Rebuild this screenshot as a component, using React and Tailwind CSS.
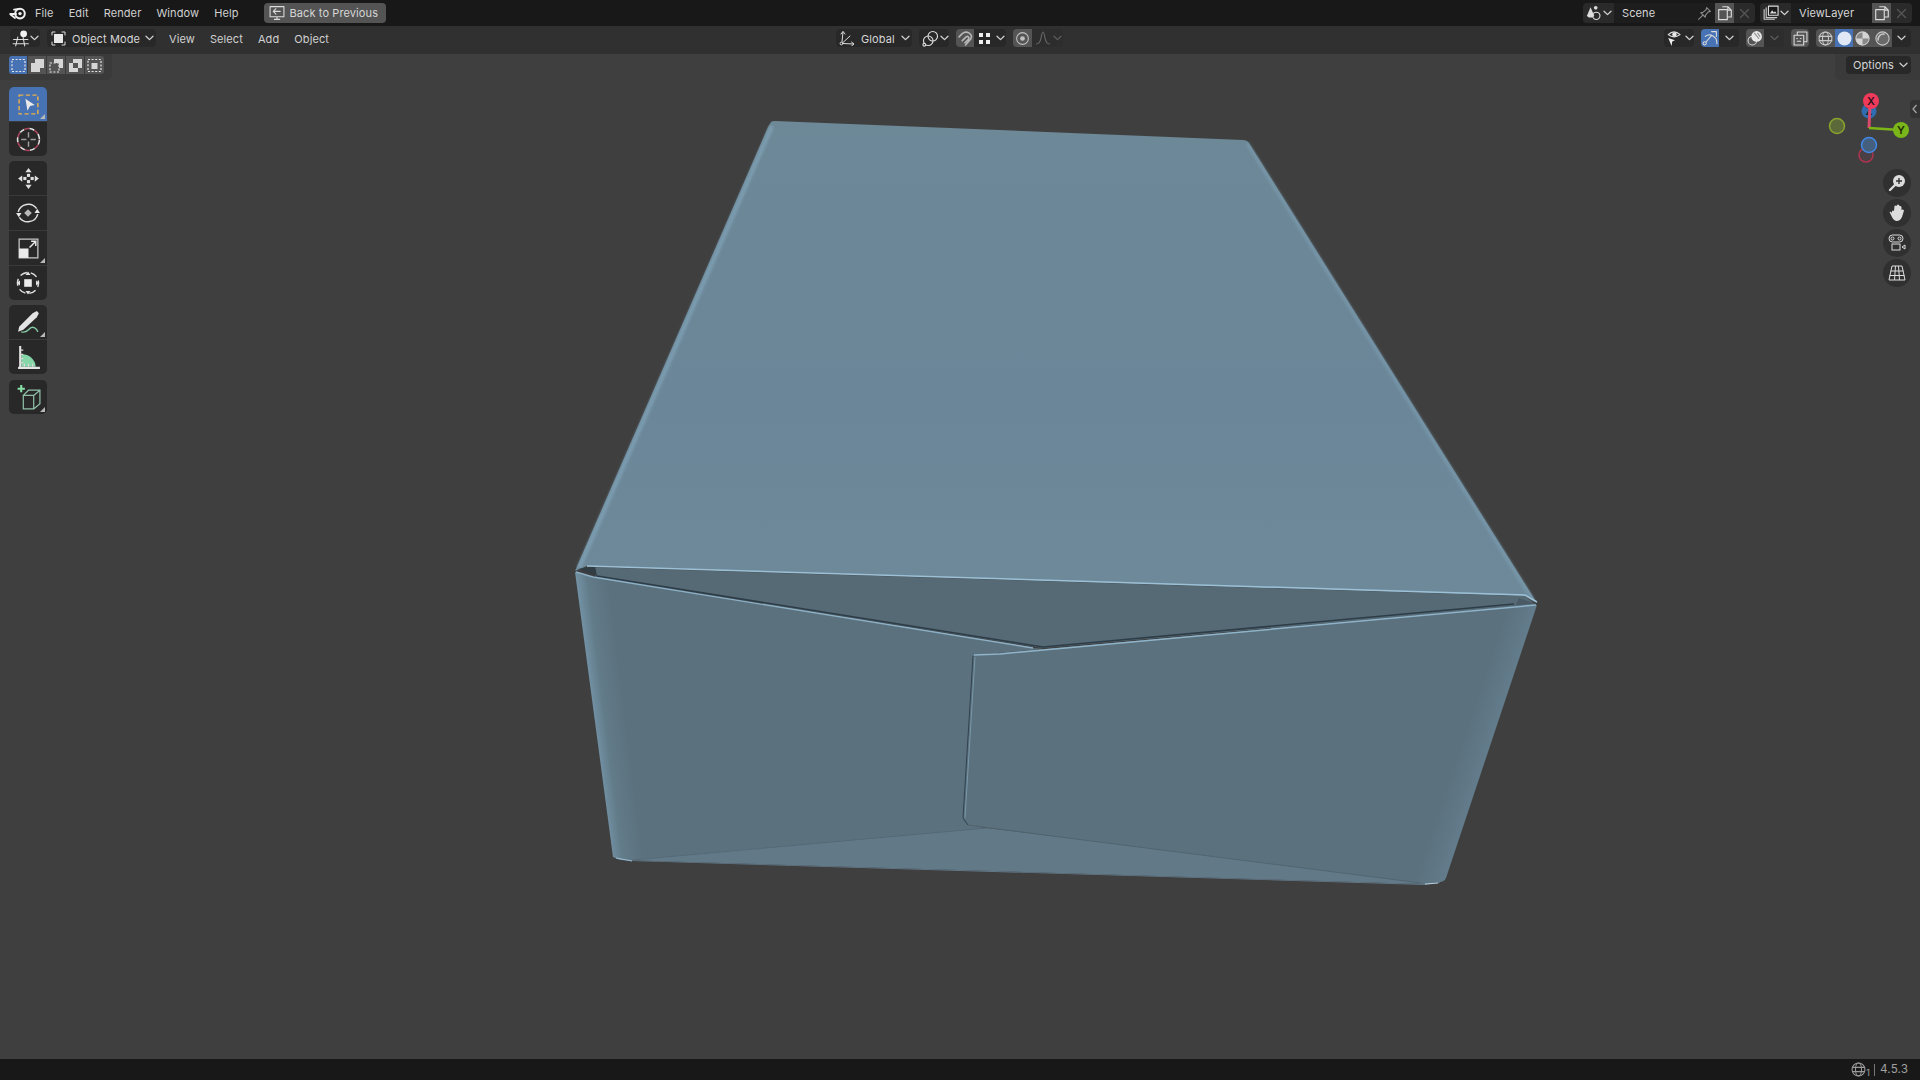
import React from "react";

const Chev = ({ dim }) => (
  <svg width="9" height="6" viewBox="0 0 9 6" className="shrink-0" fill="none" stroke={dim ? "#5c5c5c" : "#d0d0d0"} strokeWidth="1.3" strokeLinecap="round" strokeLinejoin="round">
    <path d="M1 1.2 L4.5 4.6 L8 1.2" />
  </svg>
);

const Ico = ({ s = 16, vb = 16, children, className = "" }) => (
  <svg width={s} height={s} viewBox={`0 0 ${vb} ${vb}`} fill="none" stroke="#dcdcdc" strokeWidth="1" strokeLinecap="round" strokeLinejoin="round" className={`shrink-0 ${className}`}>
    {children}
  </svg>
);

const BlenderLogo = () => (
  <svg width="18" height="14" viewBox="0 0 18 14" fill="none" stroke="#f0f0f0" strokeLinecap="round">
    <circle cx="11" cy="7.6" r="4.8" strokeWidth="2" />
    <circle cx="11" cy="7.6" r="1.7" fill="#f0f0f0" stroke="none" />
    <path d="M1.2 8 H7 M5 3.6 L10 3 M1.5 8.5 L6 12" strokeWidth="1.8" />
  </svg>
);

const ViewportIcon = () => (
  <Ico s={18} vb={17}>
    <circle cx="11" cy="4.5" r="3.2" fill="#f2f2f2" stroke="none" />
    <path d="M1.5 10 H15 M1 14 H15.5 M5.5 7.5 L3.5 16 M10.5 8 L12 16" />
  </Ico>
);

const BtnText = ({ children, className = "" }) => (
  <span className={`text-[#d6d6d6] whitespace-nowrap ${className}`}>{children}</span>
);

const CopyIcon = () => (
  <Ico s={16} vb={14}>
    <path d="M5 1.5 H9.5 L12.5 4.5 V10.5 H9.5 M9.5 1.5 V4.5 H12.5" />
    <path d="M1.5 4 H9 V12.8 H1.5 Z" fill="#545454" />
  </Ico>
);

const XIcon = () => (
  <svg width="11" height="11" viewBox="0 0 11 11" stroke="#555" strokeWidth="1.4" strokeLinecap="round"><path d="M1.5 1.5 L9.5 9.5 M9.5 1.5 L1.5 9.5" /></svg>
);

const DataField = ({ icon, label, width, pin, className = "" }) => (
  <div className={`flex h-5 rounded-[4px] overflow-hidden ${className}`}>
    <div className="w-[31px] bg-[#2a2a2a] flex items-center pl-[3px] gap-[1px]">
      {icon}
      <Chev />
    </div>
    <div className={`${width} bg-[#1d1d1d] flex items-center pl-2 pr-[3px] justify-between`}>
      <BtnText>{label}</BtnText>
      {pin && (
        <Ico s={15} vb={14}>
          <path d="M9 1.5 L12.5 5 L10.5 5.5 L8 8.5 L7.8 10.5 L3.5 6.2 L5.5 6 L8.5 3.5 Z M5.5 8.5 L1.5 12.5" stroke="#8a8a8a" />
        </Ico>
      )}
    </div>
    <div className="w-[19px] bg-[#545454] flex items-center justify-center"><CopyIcon /></div>
    <div className="w-[21px] bg-[#2a2a2a] flex items-center justify-center"><XIcon /></div>
  </div>
);

const SelMode = ({ kind, active }) => (
  <div className={`w-[19px] h-[18px] flex items-center justify-center ${active ? "bg-[#4772b3]" : "bg-[#545454]"} border-r border-[#3a3a3a] last:border-r-0`}>
    <svg width="15" height="15" viewBox="0 0 15 15" fill="none" stroke="#e6e6e6" strokeWidth="1.2" strokeDasharray="2 1.6">
      {kind === 0 && <rect x="1" y="1.5" width="13" height="12" />}
      {kind === 1 && <path d="M1 5 H5 V1 H14 V10 H10 V14 H1 Z" fill="#d6d6d6" stroke="none" />}
      {kind === 2 && (
        <>
          <rect x="1" y="5" width="9" height="9" />
          <path d="M5 1 H14 V10 H10 V5 H5 Z" fill="#d6d6d6" stroke="none" />
        </>
      )}
      {kind === 3 && <path fillRule="evenodd" d="M1 5 H5 V1 H14 V10 H10 V14 H1 Z M5 5 V10 H10 V5 Z" fill="#d6d6d6" stroke="none" />}
      {kind === 4 && (
        <>
          <rect x="1" y="1.5" width="13" height="12" />
          <rect x="4.5" y="5" width="6" height="6" fill="#d6d6d6" stroke="none" />
        </>
      )}
    </svg>
  </div>
);

const Corner = () => (
  <svg width="5" height="5" viewBox="0 0 5 5" className="absolute right-[2px] bottom-[2px]"><path d="M5 0 V5 H0 Z" fill="#b8b8b8" /></svg>
);

const ToolBtn = ({ active, corner, children, className = "" }) => (
  <div className={`relative h-[34px] flex items-center justify-center ${active ? "bg-[#4772b3]" : "bg-[#282828]"} ${className}`}>
    {children}
    {corner && <Corner />}
  </div>
);

const ToolGroup = ({ children, className = "" }) => (
  <div className={`w-[38px] rounded-[5px] overflow-hidden flex flex-col gap-px bg-[#3a3a3a] ${className}`}>{children}</div>
);

const NavBtn = ({ children }) => (
  <div className="w-7 h-7 rounded-full bg-[#303030] flex items-center justify-center">{children}</div>
);

const Model = () => (
  <svg viewBox="0 54 1920 1005" className="absolute inset-0 w-full h-full">
    <defs>
      <linearGradient id="topFace" x1="0" y1="0" x2="0" y2="1">
        <stop offset="0" stopColor="#6d8897" />
        <stop offset="0.6" stopColor="#6b8698" />
        <stop offset="1" stopColor="#6e8a9a" />
      </linearGradient>
      <linearGradient id="flapL" gradientUnits="userSpaceOnUse" x1="575" y1="572" x2="607" y2="568">
        <stop offset="0" stopColor="#7292a5" />
        <stop offset="0.35" stopColor="#637c8a" />
        <stop offset="1" stopColor="#5b717e" />
      </linearGradient>
      <linearGradient id="flapR" gradientUnits="userSpaceOnUse" x1="1537" y1="605" x2="1510" y2="596">
        <stop offset="0" stopColor="#637c8b" />
        <stop offset="1" stopColor="#5b717e" />
      </linearGradient>
      <filter id="soft"><feGaussianBlur stdDeviation="1.5" /></filter>
    </defs>

    {/* top face */}
    <path d="M771 122 Q772 121 775 121 L1243 140 Q1247 140 1249 143 L1537 603 L1525 596 L587 566 L575 571 L768 127 Z" fill="url(#topFace)" />
    <path d="M772 126 L579 568" stroke="#84a8bd" strokeWidth="4" fill="none" filter="url(#soft)" opacity="0.7" />
    <path d="M1247 143 L1533 600" stroke="#7ea0b4" strokeWidth="3" fill="none" filter="url(#soft)" opacity="0.7" />

    {/* inner recess */}
    <path d="M587 567 L1525 596 L1536 605 L1043 648 L597 577 Z" fill="#566a76" />

    {/* left flap */}
    <path d="M575 572 L593 577 L1033 648 L1044 649 L973 655 L963 820 L968 825 L987 828 L633 860 L620 860 L613 857 Z" fill="url(#flapL)" />
    {/* right flap */}
    <path d="M973 655 L1044 649 L1537 605 L1446 878 Q1444 882 1440 882 L1425 884 L1060 837 L968 825 L963 820 Z" fill="url(#flapR)" />
    {/* bottom strip */}
    <path d="M620 860 L632 860 L987 828 L1060 837 L1421 883 L1425 884 Z" fill="#627988" />
    <path d="M613 857 L620 860 L632 861 L1425 885 L1440 883 L1440 882 L1425 884 L620 860 Z" fill="#627988" />

    {/* corner holes */}
    <path d="M578 569 L595 566 L597 576 Z" fill="#323c43" />
    <path d="M1516 605 L1519 598 L1536 604 Z" fill="#4a5a64" />

    {/* seams */}
    <path d="M597 576 L1043 647 L1514 604" stroke="#2d3d48" strokeWidth="1.6" fill="none" />
    <path d="M587 566 L1525 595 L1537 602" stroke="#9cc0d6" strokeWidth="1.5" fill="none" />
    <path d="M576 572 L593 577 L1033 648" stroke="#8cb0c6" strokeWidth="1.4" fill="none" />
    <path d="M974 655 L1000 654 L1536 605" stroke="#8fb3c9" strokeWidth="1.5" fill="none" />
    <path d="M973 656 L963 818 L968 825" stroke="#2f414d" strokeWidth="0.9" fill="none" />
    <path d="M975 657 L965 818" stroke="#86a6b9" strokeWidth="0.7" fill="none" />
    <path d="M968 825 L1060 837 L1421 883" stroke="#50656f" strokeWidth="0.9" fill="none" />
    <path d="M633 860 L987 828" stroke="#556b79" strokeWidth="0.8" fill="none" />
    <path d="M616 858 L632 861" stroke="#9cc0d6" strokeWidth="1" fill="none" />
    <path d="M1425 884 L1438 883" stroke="#b8d0dc" strokeWidth="1" fill="none" />
  </svg>
);

const Gizmo = () => (
  <svg width="90" height="90" viewBox="1825 90 90 80" className="absolute top-[36px] right-[5px] w-[90px] h-[80px]">
    <circle cx="1866" cy="155" r="7" fill="#4a3f44" stroke="#b03450" strokeWidth="1.5" />
    <circle cx="1869" cy="111" r="7.5" fill="#2f6cb0" />
    <text x="1869" y="115" fontSize="10" fontWeight="700" textAnchor="middle" fill="#123" fontFamily="Inter, sans-serif">Z</text>
    <circle cx="1837" cy="126" r="7.5" fill="#5c6a3a" stroke="#8aa32e" strokeWidth="1.5" />
    <path d="M1869 128 L1870 104" stroke="#d84a6c" strokeWidth="3" />
    <path d="M1869 128 L1900 130" stroke="#7cb518" strokeWidth="2.5" />
    <circle cx="1869" cy="145" r="7.5" fill="#44607e" stroke="#4189ea" strokeWidth="1.5" />
    <circle cx="1871" cy="101" r="8" fill="#f03a5c" />
    <text x="1871" y="105" fontSize="11" fontWeight="600" textAnchor="middle" fill="#30111a" fontFamily="Inter, sans-serif">X</text>
    <circle cx="1901" cy="130" r="8" fill="#7ab51a" />
    <text x="1901" y="134" fontSize="11" fontWeight="600" textAnchor="middle" fill="#1d2c05" fontFamily="Inter, sans-serif">Y</text>
  </svg>
);

export default function App() {
  return (
    <div className="w-screen h-screen overflow-hidden flex flex-col bg-[#3f3f3f] font-['Inter',sans-serif] text-[11px] tracking-[0.1px]">
      {/* top bar */}
      <header className="h-[26px] shrink-0 bg-[#181818] flex items-center">
        <div className="w-[35px] pl-[9px] flex"><BlenderLogo /></div>
        <nav className="flex gap-[15px] text-[#d0d0d0]">
          <span>File</span>
          <span>Edit</span>
          <span>Render</span>
          <span>Window</span>
          <span>Help</span>
        </nav>
        <div className="ml-[25px] w-[122px] h-5 rounded-[4px] bg-[#545454] flex items-center pl-[5px] gap-[5px]">
          <Ico s={16} vb={15}>
            <path d="M1 1.5 H14 V11 H1 Z M5 13.5 H10 M7.5 11 V13.5" />
            <path d="M10.5 6 H4 M6.5 3.5 L4 6 L6.5 8.5" />
          </Ico>
          <BtnText>Back to Previous</BtnText>
        </div>
        <div className="ml-auto pr-2 flex gap-[5px]">
          <DataField
            width="w-[101px]"
            label="Scene"
            pin
            icon={
              <Ico s={16} vb={14}>
                <path d="M4 2 L1 9 Q1 11 4 11 Q7 11 7 9 Z" fill="#dcdcdc" stroke="none" />
                <circle cx="8.5" cy="2.5" r="1.6" fill="#dcdcdc" stroke="none" />
                <circle cx="9" cy="9.5" r="3.2" />
              </Ico>
            }
          />
          <DataField
            width="w-[81px]"
            label="ViewLayer"
            icon={
              <Ico s={16} vb={14}>
                <path d="M1 4 V12.5 H10 M2.8 2.5 V11 H12" stroke="#c8c8c8" />
                <rect x="4.8" y="1" width="8.4" height="8" fill="#181818" />
                <path d="M6 7.5 L8 4.5 L9.5 6.5 L10.5 5.5 L12 7.5 Z" fill="#dcdcdc" stroke="none" />
              </Ico>
            }
          />
        </div>
      </header>

      {/* 3D viewport header */}
      <div className="h-[28px] shrink-0 bg-[#303030] grid grid-cols-[836px_828px_1fr] items-start pt-[3px]">
        <div className="flex items-center pl-[10px]">
          <div className="w-[30px] h-[18px] rounded-[4px] bg-[#282828] flex items-center pl-[2px]">
            <ViewportIcon />
            <Chev />
          </div>
          <div className="ml-[7px] w-[109px] h-[18px] rounded-[4px] bg-[#282828] flex items-center pl-[4px]">
            <Ico s={15} vb={15}>
              <path d="M1 4 V1 H4 M11 1 H14 V4 M14 11 V14 H11 M4 14 H1 V11" />
              <rect x="3" y="3" width="9" height="9" fill="#e8e8e8" stroke="none" />
            </Ico>
            <BtnText className="ml-[6px] translate-y-px">Object Mode</BtnText>
            <span className="ml-auto mr-[2px]"><Chev /></span>
          </div>
          <nav className="ml-[13px] flex gap-[15px] text-[#d0d0d0] translate-y-px">
            <span>View</span>
            <span>Select</span>
            <span>Add</span>
            <span>Object</span>
          </nav>
        </div>

        <div className="flex items-center gap-[7px]">
          <div className="w-[76px] h-[18px] rounded-[4px] bg-[#282828] flex items-center pl-[3px]">
            <Ico s={16} vb={16}>
              <circle cx="2.5" cy="13.5" r="1.4" />
              <path d="M3 12 L4 2 M2 4 L4 1.5 L6 4 M4 13.5 L14.5 14 M12.5 12 L15 14 L12.5 16 M4 12.5 L11 6" />
            </Ico>
            <BtnText className="ml-[6px] translate-y-px">Global</BtnText>
            <span className="ml-auto mr-[2px]"><Chev /></span>
          </div>
          <div className="w-[30px] h-[18px] rounded-[4px] bg-[#282828] flex items-center pl-[3px] gap-[1px]">
            <Ico s={17} vb={15}>
              <circle cx="9.5" cy="5.5" r="4.2" />
              <circle cx="5.5" cy="9.5" r="4.2" />
              <circle cx="2" cy="13" r="1.2" fill="#1d1d1d" />
            </Ico>
            <Chev />
          </div>
          <div className="flex h-[18px] rounded-[4px] overflow-hidden">
            <div className="w-[18px] bg-[#545454] flex items-center justify-center">
              <svg width="15" height="15" viewBox="0 0 14 14" fill="none" stroke="#b8b8b8" strokeWidth="1.5" strokeLinecap="round">
                <path d="M7 13 L11.5 8 Q14 4.5 10.5 2 Q7 0 4 2.5 L1 5.5 M4 9 L7.5 5.5 Q9 4.5 10 6 Q10.5 7 9.5 8 L6.5 11" />
              </svg>
            </div>
            <div className="w-[32px] bg-[#282828] flex items-center pl-[4px] gap-[5px]">
              <svg width="13" height="13" viewBox="0 0 13 13" fill="#f0f0f0">
                <rect x="1" y="1" width="4" height="4" />
                <rect x="8" y="1" width="4" height="4" />
                <rect x="1" y="8" width="4" height="4" />
                <rect x="8" y="8" width="4" height="4" />
              </svg>
              <Chev />
            </div>
          </div>
          <div className="flex h-[18px] rounded-[4px] overflow-hidden">
            <div className="w-[19px] bg-[#545454] flex items-center justify-center">
              <svg width="15" height="15" viewBox="0 0 14 14" fill="none" stroke="#c0c0c0" strokeWidth="1">
                <circle cx="7" cy="7" r="5.5" />
                <circle cx="7" cy="7" r="2.2" fill="#c0c0c0" stroke="none" />
              </svg>
            </div>
            <div className="w-[31px] bg-[#2d2d2d] flex items-center pl-[3px] gap-[2px]">
              <svg width="16" height="14" viewBox="0 0 16 14" fill="none" stroke="#666" strokeWidth="1.2"><path d="M1 13 Q5 13 6 7 Q7 1 8 1 Q9 1 10 7 Q11 13 15 13" /></svg>
              <Chev dim />
            </div>
          </div>
        </div>

        <div className="flex items-center">
          <div className="w-[30px] h-[18px] rounded-[4px] bg-[#282828] flex items-center pl-[2px] gap-[1px]">
            <Ico s={18} vb={16}>
              <path d="M2 5 Q7 0 12.5 5 Q7 9 2 5 Z" fill="#282828" />
              <circle cx="7.5" cy="4.8" r="2" fill="#e8e8e8" stroke="none" />
              <path d="M2 8 L8 10 L5.5 11 L5 15 Z" fill="#f0f0f0" stroke="none" />
            </Ico>
            <Chev />
          </div>
          <div className="ml-[7px] flex h-[18px] rounded-[4px] overflow-hidden">
            <div className="w-[18px] bg-[#4772b3] flex items-center justify-center">
              <Ico s={16} vb={15}>
                <circle cx="2.5" cy="12.5" r="1.5" />
                <path d="M4 11 L9 5 M3 6 Q8 2 13 8 Q14 10 14 13 M9 1.5 H13.5 V6" />
              </Ico>
            </div>
            <div className="w-[20px] bg-[#282828] flex items-center justify-center"><Chev /></div>
          </div>
          <div className="ml-[7px] flex h-[18px] rounded-[4px] overflow-hidden">
            <div className="w-[18px] bg-[#545454] flex items-center justify-center">
              <Ico s={16} vb={15}>
                <circle cx="5" cy="10" r="4" stroke="#d8d8d8" />
                <circle cx="9" cy="6" r="5" fill="#e8e8e8" stroke="none" />
                <path d="M7 3 L11 8 M10 3 L12 6" stroke="#8a8a8a" />
              </Ico>
            </div>
            <div className="w-[20px] bg-[#2d2d2d] flex items-center justify-center"><Chev dim /></div>
          </div>
          <div className="ml-[7px] w-[18px] h-[18px] rounded-[4px] bg-[#545454] flex items-center justify-center">
            <Ico s={15} vb={14}>
              <path d="M4 4 V1 H13 V10 H10" />
              <rect x="1" y="4" width="9" height="9" fill="#545454" />
              <path d="M4 9.5 H7 M3.5 7 H4 M7 7 H7.5" />
            </Ico>
          </div>
          <div className="ml-[7px] flex h-[18px] rounded-[4px] overflow-hidden">
            <div className="w-[19px] bg-[#545454] flex items-center justify-center">
              <Ico s={15} vb={14}>
                <circle cx="7" cy="7" r="6" stroke="#c8c8c8" />
                <ellipse cx="7" cy="7" rx="2.8" ry="6" stroke="#c8c8c8" />
                <path d="M1 5 H13 M1 9 H13" stroke="#c8c8c8" />
              </Ico>
            </div>
            <div className="w-[18px] bg-[#4772b3] flex items-center justify-center">
              <svg width="15" height="15" viewBox="0 0 14 14"><circle cx="7" cy="7" r="6.5" fill="#e0e8f5" /></svg>
            </div>
            <div className="w-[19px] bg-[#545454] flex items-center justify-center">
              <svg width="15" height="15" viewBox="0 0 14 14">
                <circle cx="7" cy="7" r="6.2" fill="#888" stroke="#c8c8c8" />
                <path d="M7 .8 A6.2 6.2 0 0 1 13.2 7 H7 Z M7 7 V13.2 A6.2 6.2 0 0 1 .8 7 Z" fill="#d4d4d4" />
              </svg>
            </div>
            <div className="w-[20px] bg-[#545454] flex items-center justify-center">
              <svg width="15" height="15" viewBox="0 0 14 14" fill="none" stroke="#c8c8c8">
                <circle cx="7" cy="7" r="6.2" fill="#6a6a6a" />
                <path d="M3 9 A5 5 0 0 1 9 3" strokeWidth="1.4" />
              </svg>
            </div>
            <div className="w-[19px] bg-[#282828] flex items-center justify-center"><Chev /></div>
          </div>
        </div>
      </div>

      {/* viewport */}
      <main className="relative flex-1 min-h-0 overflow-hidden">
        <Model />

        {/* tool settings strip */}
        <div className="absolute top-0 left-0 w-[112px] h-[26px] bg-[#3a3a3a] rounded-br-[6px] pl-[9px] pt-[2px]">
          <div className="flex w-fit rounded-[3px] overflow-hidden">
            <SelMode kind={0} active />
            <SelMode kind={1} />
            <SelMode kind={2} />
            <SelMode kind={3} />
            <SelMode kind={4} />
          </div>
        </div>
        <div className="absolute top-0 right-0 w-[85px] h-[26px] bg-[#3a3a3a] rounded-bl-[6px] flex justify-end pt-[2px] pr-[9px]">
          <div className="w-[65px] h-[18px] rounded-[4px] bg-[#282828] flex items-center pl-[7px]">
            <BtnText>Options</BtnText>
            <span className="ml-auto mr-[3px]"><Chev /></span>
          </div>
        </div>

        {/* toolbar */}
        <aside className="absolute left-[9px] top-[33px] flex flex-col gap-[5px]">
          <ToolGroup>
            <ToolBtn active corner>
              <svg width="25" height="25" viewBox="0 0 24 24" fill="none">
                <rect x="3" y="3" width="18" height="18" stroke="#e8b04a" strokeWidth="1.4" strokeDasharray="4 2.4" />
                <path d="M9 6.5 L18 12.5 L13.5 13.5 L11 18 Z" fill="#e8e8e8" />
              </svg>
            </ToolBtn>
            <ToolBtn>
              <svg width="25" height="25" viewBox="0 0 24 24" fill="none">
                <circle cx="12" cy="12" r="10.5" stroke="#e0e0e0" strokeWidth="1.5" strokeDasharray="5 5" />
                <circle cx="12" cy="12" r="10.5" stroke="#a8445c" strokeWidth="1.5" strokeDasharray="5 5" strokeDashoffset="5" />
                <path d="M12 5 V10 M12 14 V19 M5 12 H10 M14 12 H19" stroke="#a0a0a0" strokeWidth="1.4" />
              </svg>
            </ToolBtn>
          </ToolGroup>
          <ToolGroup>
            <ToolBtn>
              <svg width="25" height="25" viewBox="0 0 24 24" fill="#e0e0e0">
                <path d="M12 2 L15 6 H9 Z M12 22 L9 18 H15 Z M2 12 L6 9 V15 Z M22 12 L18 15 V9 Z" />
                <rect x="10.5" y="7.5" width="3" height="3" />
                <rect x="10.5" y="13.5" width="3" height="3" />
                <rect x="7" y="10.5" width="3" height="3" />
                <rect x="14" y="10.5" width="3" height="3" />
              </svg>
            </ToolBtn>
            <ToolBtn>
              <svg width="26" height="26" viewBox="0 0 24 24" fill="none">
                <path d="M3 11 A9.5 9.5 0 0 1 20 8 M21 13 A9.5 9.5 0 0 1 4 16" stroke="#e0e0e0" strokeWidth="1.4" />
                <path d="M12 8.5 L15.5 12 L12 15.5 L8.5 12 Z" fill="#b8b8b8" />
                <path d="M1 12 H6 L3.5 16 Z M23 12 H18 L20.5 8 Z" fill="#e8e8e8" />
              </svg>
            </ToolBtn>
            <ToolBtn corner>
              <svg width="25" height="25" viewBox="0 0 24 24" fill="none">
                <rect x="3" y="3" width="18" height="18" stroke="#c8c8c8" strokeWidth="1.2" />
                <rect x="3" y="12" width="9" height="9" fill="#ececec" />
                <path d="M13 11 L19 5 M14.5 5 H19 V9.5" stroke="#e8e8e8" strokeWidth="1.4" />
              </svg>
            </ToolBtn>
            <ToolBtn>
              <svg width="26" height="26" viewBox="0 0 26 26" fill="none">
                <circle cx="13" cy="13" r="10.5" stroke="#e0e0e0" strokeWidth="1.4" strokeDasharray="7 4" strokeDashoffset="3" />
                <rect x="9.2" y="9.2" width="7.6" height="7.6" fill="#ececec" />
                <path d="M13 1.5 L15.5 5 H10.5 Z M13 24.5 L10.5 21 H15.5 Z M1.5 13 L5 10.5 V15.5 Z M24.5 13 L21 15.5 V10.5 Z" fill="#e0e0e0" />
              </svg>
            </ToolBtn>
          </ToolGroup>
          <ToolGroup>
            <ToolBtn corner>
              <svg width="27" height="27" viewBox="0 0 26 26" fill="none">
                <path d="M4 17 L17 4 L21 2 L23 4 L21 8 L8 20 L3 22 Z" fill="#e4e4e4" />
                <path d="M6 22 Q10 23 13 20 Q17 15 21 20 L22 22" stroke="#86c7a4" strokeWidth="1.4" />
              </svg>
            </ToolBtn>
            <ToolBtn>
              <svg width="27" height="27" viewBox="0 0 26 26" fill="none">
                <path d="M6 10 A13 13 0 0 1 20 22 H6 Z" fill="#86d6a8" />
                <path d="M5 2 V22 M3 23 H24" stroke="#e4e4e4" strokeWidth="2" />
                <path d="M5 6 H8 M5 10 H8 M5 14 H8 M5 18 H8 M9 22 V19 M13 22 V19 M17 22 V19" stroke="#d8d8d8" strokeWidth="1.2" />
              </svg>
            </ToolBtn>
          </ToolGroup>
          <ToolGroup className="mt-px">
            <ToolBtn corner>
              <svg width="27" height="27" viewBox="0 0 26 26" fill="none">
                <path d="M8 11 H18 V24 H8 Z M8 11 L13 6 H24 V19 L18 24 M18 11 L24 6" stroke="#8fbfa6" strokeWidth="1.2" />
                <path d="M6 1 V8 M2.5 4.5 H9.5" stroke="#86e0a8" strokeWidth="2" />
              </svg>
            </ToolBtn>
          </ToolGroup>
        </aside>

        {/* gizmo, sidebar tab and navigation */}
        <Gizmo />
        <div className="absolute right-0 top-[46px] w-[10px] h-[18px] bg-[#333333] rounded-l-[4px] flex items-center justify-center">
          <svg width="6" height="10" viewBox="0 0 6 10" fill="none" stroke="#a8a8a8" strokeWidth="1.2"><path d="M4.5 1 L1 5 L4.5 9" /></svg>
        </div>
        <div className="absolute right-[9px] top-[115px] flex flex-col gap-[2px]">
          <NavBtn>
            <svg width="20" height="20" viewBox="0 0 20 20" fill="none" stroke="#dcdcdc">
              <circle cx="12" cy="8" r="6" fill="#dcdcdc" stroke="none" />
              <path d="M12 5 V11 M9 8 H15" stroke="#303030" strokeWidth="1.4" />
              <path d="M8 12 L3 17" strokeWidth="2.4" strokeLinecap="round" />
            </svg>
          </NavBtn>
          <NavBtn>
            <svg width="20" height="20" viewBox="0 0 20 20" fill="#dcdcdc">
              <path d="M5 8 Q6 7 7 8 L7.5 3 Q8.5 2 9.5 3 L10 2 Q11 1 12 2 L12.5 3 Q14 2.5 14.5 4 L14.5 7 Q16 6 17 7.5 L15 14 Q13 18.5 9 18 Q6 17 4.5 13 L2.5 9 Q3.5 8 5 10 Z" />
            </svg>
          </NavBtn>
          <NavBtn>
            <svg width="20" height="20" viewBox="0 0 20 20" fill="none" stroke="#dcdcdc">
              <rect x="2" y="2" width="14" height="7" rx="3.5" />
              <circle cx="5.5" cy="5.5" r="1.5" />
              <circle cx="12.5" cy="5.5" r="1.5" />
              <rect x="5" y="11" width="8" height="6" />
              <path d="M15 14 L18 12 V16 Z" />
            </svg>
          </NavBtn>
          <NavBtn>
            <svg width="20" height="20" viewBox="0 0 20 20" fill="none" stroke="#dcdcdc">
              <path d="M5 3 H15 L18 17 H2 Z M3.5 8 H16.5 M2.5 12.5 H17.5 M8.5 3 L7.5 17 M11.5 3 L12.5 17" />
            </svg>
          </NavBtn>
        </div>
      </main>

      {/* status bar */}
      <footer className="h-[21px] shrink-0 bg-[#181818] flex items-center justify-end pr-[12px] text-[#a0a0a0] text-[11.7px]">
        <svg width="15" height="15" viewBox="0 0 14 14" fill="none" stroke="#9a9a9a">
          <circle cx="7" cy="7" r="6" />
          <ellipse cx="7" cy="7" rx="2.8" ry="6" />
          <path d="M1.2 5 H12.8 M1.2 9 H12.8" />
        </svg>
        <span className="text-[9px] self-end mb-[1px]">1</span>
        <span className="ml-[4px] mr-[5px] w-px h-[12px] bg-[#777]" />
        <span>4.5.3</span>
      </footer>
    </div>
  );
}
